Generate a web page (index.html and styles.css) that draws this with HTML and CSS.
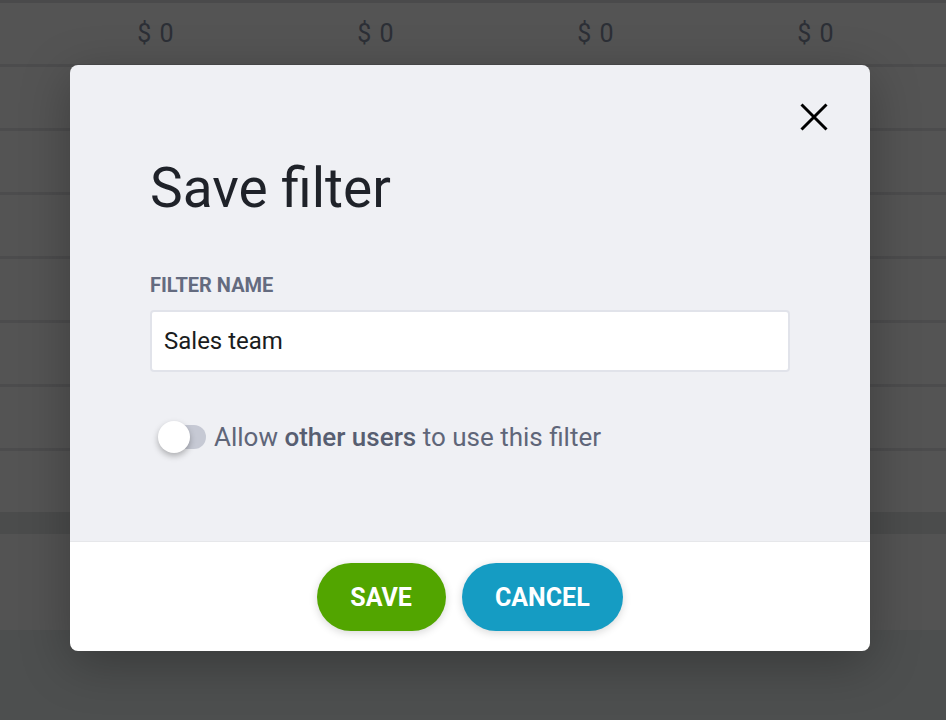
FILE: index.html
```html
<!DOCTYPE html>
<html lang="en">
<head>
<meta charset="utf-8">
<title>Save filter</title>
<link rel="stylesheet" href="styles.css">
</head>
<body>
<div class="page">
  <div class="table">
    <div class="row first">
      <span class="cell">$ 0</span>
      <span class="cell">$ 0</span>
      <span class="cell">$ 0</span>
      <span class="cell">$ 0</span>
    </div>
    <div class="row"></div>
    <div class="row"></div>
    <div class="row"></div>
    <div class="row"></div>
    <div class="row"></div>
    <div class="row"></div>
    <div class="row last"></div>
    <div class="band"></div>
    <div class="total"></div>
    <div class="bottom"></div>
  </div>

  <div class="dialog">
    <div class="dialog-body">
      <button class="close" aria-label="Close">
        <svg width="28" height="28" viewBox="0 0 28 28"><path d="M1.5 1.5 L26.5 26.5 M26.5 1.5 L1.5 26.5" stroke="#000" stroke-width="3" fill="none"/></svg>
      </button>
      <h1 class="title">Save filter</h1>
      <label class="field-label">FILTER NAME</label>
      <div class="input">Sales team</div>
      <div class="toggle-row">
        <span class="switch"><span class="track"></span><span class="knob"></span></span>
        <span class="toggle-label">Allow <b>other users</b> to use this filter</span>
      </div>
    </div>
    <div class="dialog-footer">
      <button class="btn save">SAVE</button>
      <button class="btn cancel">CANCEL</button>
    </div>
  </div>
</div>
</body>
</html>
```

FILE: styles.css
```css
* { box-sizing: border-box; }
html, body { margin: 0; padding: 0; }
body {
  width: 946px;
  height: 720px;
  overflow: hidden;
  font-family: Roboto, "Liberation Sans", sans-serif;
  background: #4d4f4f;
}
.page { position: relative; width: 946px; height: 720px; }

.table { border-top: 3px solid #4a4a4b; }
.row {
  height: 64px;
  background: #545454;
  border-bottom: 3px solid #4c4c4d;
  display: grid;
  grid-template-columns: repeat(4, 220px);
  padding-left: 46px;
  align-items: center;
}
.row.last { height: 61px; border-bottom: none; }
.cell {
  text-align: center;
  font-size: 25px;
  color: #2c2f36;
  letter-spacing: 1px;
}
.band { height: 22px; background: #4b4c4c; }
.total { height: 96px; background: #535353; }
.bottom { height: 90px; background: #4d4f4f; }

.dialog {
  position: absolute;
  left: 70px;
  top: 65px;
  width: 800px;
  border-radius: 8px;
  overflow: hidden;
  box-shadow: 0 12px 50px rgba(0, 0, 0, 0.28);
}
.dialog-body {
  position: relative;
  background: #eff0f4;
  padding: 90px 80px 88px;
  border-bottom: 1px solid #e6e7ea;
  display: flex;
  flex-direction: column;
}
.close {
  position: absolute;
  top: 38px;
  right: 42px;
  width: 28px;
  height: 28px;
  padding: 0;
  border: none;
  background: none;
  display: block;
}
.close svg { display: block; }
.title {
  margin: 0;
  font-size: 55px;
  line-height: 66px;
  font-weight: 400;
  color: #1f2229;
}
.field-label {
  margin-top: 52px;
  font-size: 20px;
  line-height: 24px;
  font-weight: 700;
  color: #646b7f;
}
.input {
  margin-top: 13px;
  height: 62px;
  background: #fff;
  border: 2px solid #e1e3ea;
  border-radius: 4px;
  padding: 0 12px;
  display: flex;
  align-items: center;
  font-size: 24px;
  color: #1a1c20;
}
.toggle-row {
  margin-top: 49px;
  height: 32px;
  display: flex;
  align-items: center;
  gap: 8px;
}
.switch {
  position: relative;
  width: 48px;
  height: 32px;
  margin-left: 8px;
  flex: none;
}
.track {
  position: absolute;
  left: 2px;
  top: 4px;
  width: 46px;
  height: 24px;
  border-radius: 12px;
  background: #c6c9d4;
}
.knob {
  position: absolute;
  left: 0;
  top: 0;
  width: 32px;
  height: 32px;
  border-radius: 50%;
  background: #fff;
  box-shadow: 0 3px 6px rgba(0, 0, 0, 0.28);
}
.toggle-label {
  font-size: 26px;
  line-height: 30px;
  color: #5f6679;
}
.toggle-label b { font-weight: 500; color: #575e71; }

.dialog-footer {
  background: #fff;
  padding: 21px 0 20px;
  display: flex;
  justify-content: center;
  gap: 16px;
}
.btn {
  height: 68px;
  padding: 0 33px;
  border: none;
  border-radius: 34px;
  font-family: Roboto, "Liberation Sans", sans-serif;
  font-size: 25px;
  font-weight: 700;
  color: #fff;
  box-shadow: 0 2px 8px rgba(0, 0, 0, 0.16);
}
.save { background: #52a500; padding: 0 34px 0 33px; }
.cancel { background: #159cc3; padding: 0 33px; }
```
